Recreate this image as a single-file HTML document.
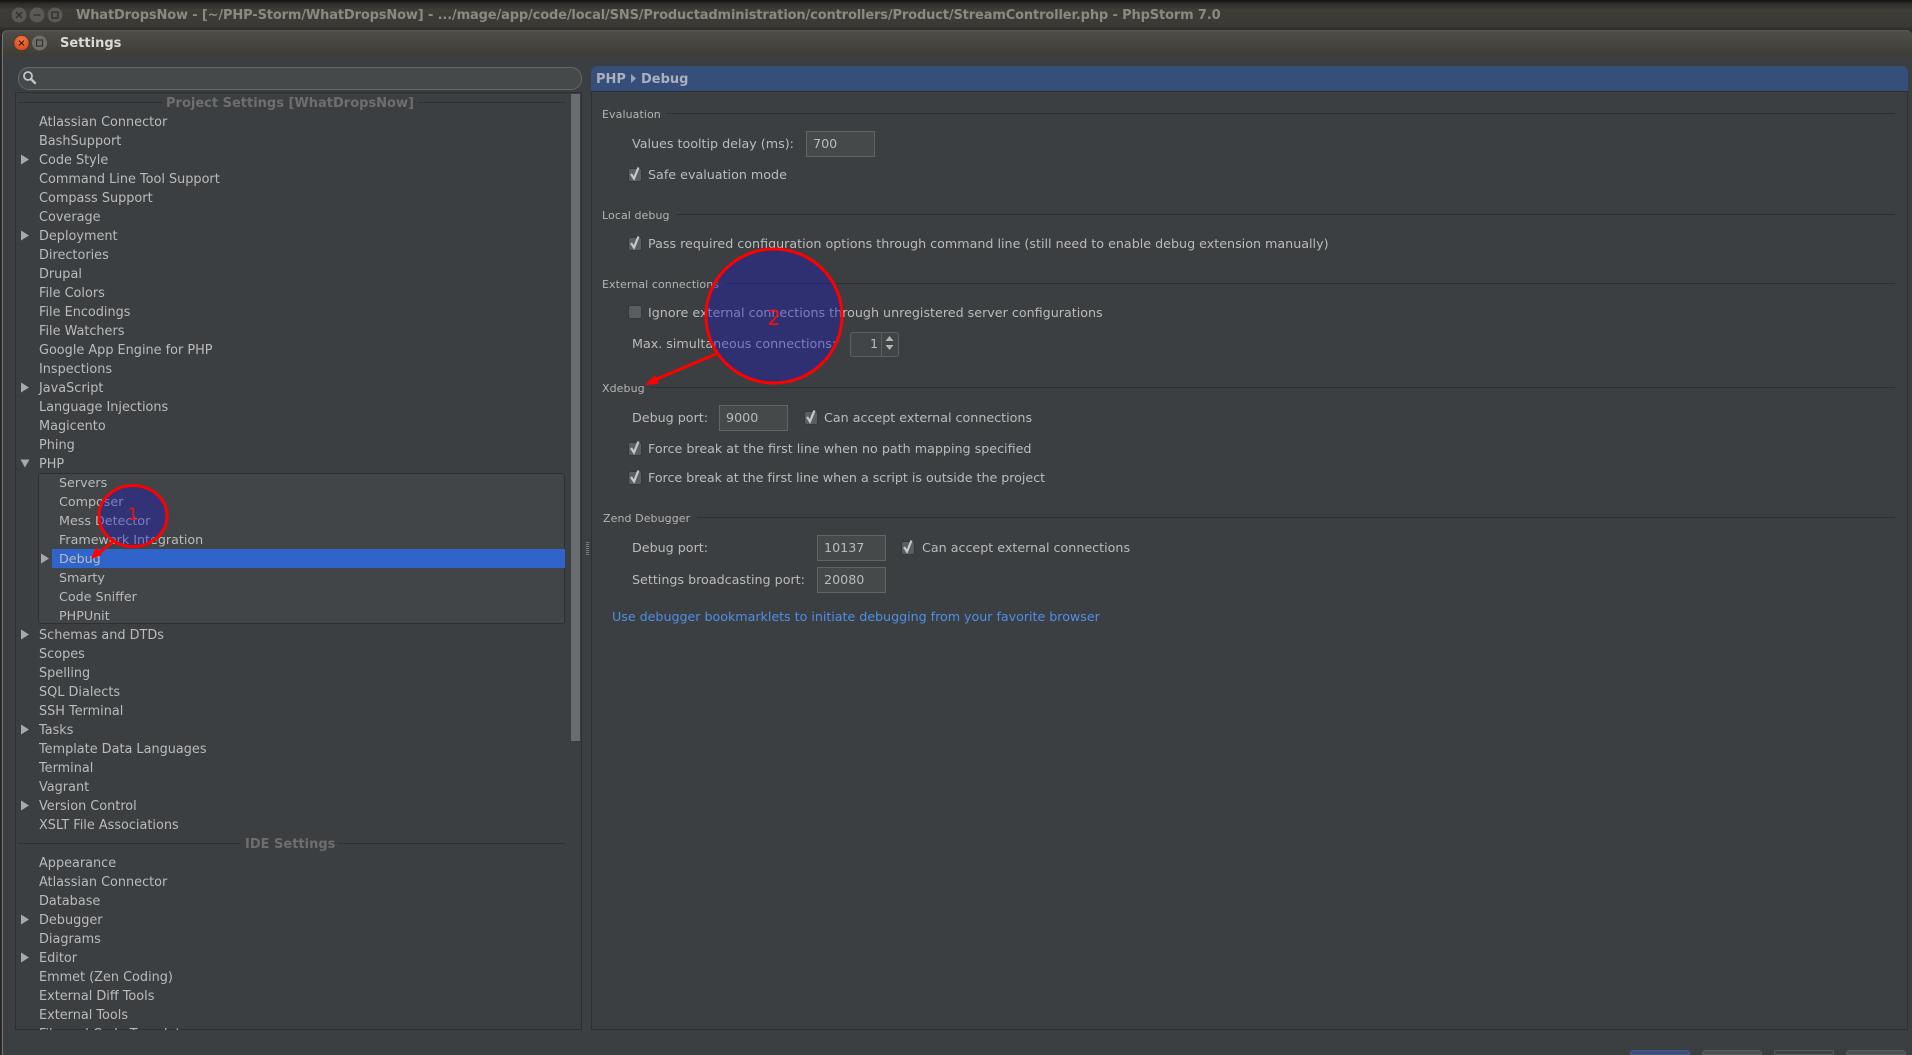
<!DOCTYPE html>
<html><head><meta charset="utf-8"><title>Settings</title>
<style>
html,body{margin:0;padding:0;background:#2b2a27}
body{width:1912px;height:1055px;overflow:hidden;position:relative;font:12.7px/19px "DejaVu Sans","Liberation Sans",sans-serif;color:#bbb}
div,a,span{position:absolute;white-space:nowrap}
#wt{left:0;top:0;width:1912px;height:30px;background:linear-gradient(#131210 0,#2e2d2a 4px,#3e3d38 10px,#3a3934 26px,#2c2b28 30px)}
#wtt{left:76px;top:5px;font-weight:bold;font-size:13px;line-height:21px;color:#8b8981;letter-spacing:-.143px}
#dlg{left:3px;top:30px;width:1909px;height:1025px;background:#3c3f41;border-radius:5px 5px 0 0;box-shadow:-1px 0 0 #77777a}
#dt{left:0;top:0;width:1909px;height:27px;border-radius:5px 5px 0 0;background:linear-gradient(#5a5953 0,#4d4c46 2px,#46453f 14px,#3d3c37 27px)}
#st{left:60px;top:34px;font-weight:bold;color:#dcdad5;font-size:13px}
#search{left:18px;top:67px;width:562px;height:21px;border:1px solid #65686a;border-radius:11px;background:#45494a}
#left{left:15px;top:92px;width:567px;height:938px;border:1px solid #2d2f30;box-sizing:border-box;overflow:hidden}
.r{left:39px;height:19px;line-height:21px;font-size:12.85px}
.c{left:59px;font-size:12.7px;line-height:19px}
.h{font-weight:bold;font-size:13px;line-height:21px;color:#6e6e6e}
.l{height:1px;background:#2d2f30}
#sub{left:38px;top:473px;width:527px;height:151px;background:#414547;border:1px solid #2d2f30;box-sizing:border-box;border-radius:3px}
#sel{left:52px;top:549px;width:513px;height:19px;background:#2f65ca}
#sb{left:571px;top:94px;width:9px;height:647px;background:#6a6d6f}
#rp{left:591px;top:66px;width:1317px;height:964px;border:1px solid #2d2f30;border-top:0;box-sizing:border-box;border-radius:6px 6px 0 0}
#rh{left:591px;top:66px;width:1317px;height:26px;background:#364e7a;border-radius:6px 6px 0 0;border-bottom:1px solid #2d3134;box-sizing:border-box;font-weight:bold;font-size:13px;color:#aab0bd;line-height:27px}
.g{font-size:11px;line-height:18px;height:16px;left:602px;color:#b4b4b4;letter-spacing:.08px}
.t{height:19px;line-height:19px}
.i{height:26px;width:69px;border:1px solid #646464;box-sizing:border-box;background:#45494a;line-height:24px;padding-left:6px;color:#bbb}
.ln{color:#4e8fe6;left:612px;top:607px;line-height:19px;text-decoration:none;letter-spacing:-.03px}
.btn{top:1050px;width:60px;height:5px;border-radius:3px 3px 0 0;box-sizing:border-box}
svg{position:absolute;overflow:visible}
</style></head><body>

<div id="wt"></div>
<div id="wtt">WhatDropsNow - [~/PHP-Storm/WhatDropsNow] - .../mage/app/code/local/SNS/Productadministration/controllers/Product/StreamController.php - PhpStorm 7.0</div>
<svg style="left:0;top:0" width="80" height="30">
<g fill="#5a5955"><circle cx="19" cy="15" r="7.5"/><circle cx="37" cy="15" r="7.5"/><circle cx="55" cy="15" r="7.5"/></g>
<g stroke="#2f2e2b" stroke-width="1.3" fill="none"><path d="M16 12l6 6M22 12l-6 6M33.5 15h7"/><rect x="52" y="12" width="6" height="6"/></g>
</svg>

<div id="dlg"><div id="dt"></div></div>
<svg style="left:0;top:30px" width="60" height="30">
<defs><radialGradient id="cl" cx=".5" cy=".35" r=".7"><stop offset="0" stop-color="#f57b4a"/><stop offset="1" stop-color="#cf4513"/></radialGradient></defs>
<circle cx="21.5" cy="13" r="7.7" fill="url(#cl)" stroke="#3a2a20" stroke-width=".6"/>
<path d="M19 10.500l5 5M24 10.500l-5 5" stroke="#3a1a0c" stroke-width="1.2"/>
<circle cx="39.500" cy="13" r="7.500" fill="#6f6e69"/>
<rect x="36.500" y="10" width="6" height="6" fill="none" stroke="#34332f" stroke-width="1.2"/>
</svg>
<div id="st">Settings</div>

<div id="search"></div>
<svg style="left:22px;top:70px" width="16" height="16"><circle cx="6" cy="6" r="4" fill="none" stroke="#c4c4c4" stroke-width="1.8"/><path d="M9 9l4 4" stroke="#c4c4c4" stroke-width="2.400" stroke-linecap="round"/></svg>

<div id="left"></div>
<div id="sb"></div>
<div class="l" style="left:18px;top:102px;width:145px"></div>
<div class="l" style="left:418px;top:102px;width:147px"></div>
<div class="h" style="left:166px;top:93px">Project Settings [WhatDropsNow]</div>
<div id="sub"></div>
<div id="sel"></div>
<div class="l" style="left:18px;top:843px;width:223px"></div>
<div class="l" style="left:338px;top:843px;width:227px"></div>
<div class="h" style="left:245px;top:834px">IDE Settings</div>

<div class="r" style="top:112px">Atlassian Connector</div>
<div class="r" style="top:131px">BashSupport</div>
<div class="r" style="top:150px">Code Style</div>
<div class="r" style="top:169px">Command Line Tool Support</div>
<div class="r" style="top:188px">Compass Support</div>
<div class="r" style="top:207px">Coverage</div>
<div class="r" style="top:226px">Deployment</div>
<div class="r" style="top:245px">Directories</div>
<div class="r" style="top:264px">Drupal</div>
<div class="r" style="top:283px">File Colors</div>
<div class="r" style="top:302px">File Encodings</div>
<div class="r" style="top:321px">File Watchers</div>
<div class="r" style="top:340px">Google App Engine for PHP</div>
<div class="r" style="top:359px">Inspections</div>
<div class="r" style="top:378px">JavaScript</div>
<div class="r" style="top:397px">Language Injections</div>
<div class="r" style="top:416px">Magicento</div>
<div class="r" style="top:435px">Phing</div>
<div class="r" style="top:454px">PHP</div>
<div class="r c" style="top:473px">Servers</div>
<div class="r c" style="top:492px">Composer</div>
<div class="r c" style="top:511px">Mess Detector</div>
<div class="r c" style="top:530px">Framework Integration</div>
<div class="r c" style="top:549px">Debug</div>
<div class="r c" style="top:568px">Smarty</div>
<div class="r c" style="top:587px">Code Sniffer</div>
<div class="r c" style="top:606px">PHPUnit</div>
<div class="r" style="top:625px">Schemas and DTDs</div>
<div class="r" style="top:644px">Scopes</div>
<div class="r" style="top:663px">Spelling</div>
<div class="r" style="top:682px">SQL Dialects</div>
<div class="r" style="top:701px">SSH Terminal</div>
<div class="r" style="top:720px">Tasks</div>
<div class="r" style="top:739px">Template Data Languages</div>
<div class="r" style="top:758px">Terminal</div>
<div class="r" style="top:777px">Vagrant</div>
<div class="r" style="top:796px">Version Control</div>
<div class="r" style="top:815px">XSLT File Associations</div>
<div class="r" style="top:853px">Appearance</div>
<div class="r" style="top:872px">Atlassian Connector</div>
<div class="r" style="top:891px">Database</div>
<div class="r" style="top:910px">Debugger</div>
<div class="r" style="top:929px">Diagrams</div>
<div class="r" style="top:948px">Editor</div>
<div class="r" style="top:967px">Emmet (Zen Coding)</div>
<div class="r" style="top:986px">External Diff Tools</div>
<div class="r" style="top:1005px">External Tools</div>
<div style="left:0;top:1020px;width:560px;height:10px;overflow:hidden"><div class="r" style="top:4px">File and Code Templates</div></div>

<svg style="left:0;top:0" width="60" height="1055">
<g fill="#a8a8a8">
<path d="M21 154.500l8 5-8 5zM21 230.500l8 5-8 5zM21 382.500l8 5-8 5zM21 629.500l8 5-8 5zM21 724.500l8 5-8 5zM21 800.500l8 5-8 5zM21 914.500l8 5-8 5zM21 952.500l8 5-8 5zM41 553.500l8 5-8 5z"/>
<path d="M20.500 459.500l9 0-4.500 8z"/>
</g></svg>

<div id="rp"></div>
<div id="rh"><span style="left:5px;top:0">PHP</span><span style="left:50px;top:0">Debug</span></div>
<svg style="left:631px;top:74px" width="6" height="10"><path d="M0 0l5 4.500-5 4.500z" fill="#9aa3b3"/></svg>

<div class="g" style="top:106px">Evaluation</div><div class="l" style="left:666px;top:113px;width:1229px"></div>
<div class="g" style="top:207px">Local debug</div><div class="l" style="left:676px;top:214px;width:1219px"></div>
<div class="g" style="top:276px">External connections</div><div class="l" style="left:726px;top:283px;width:1169px"></div>
<div class="g" style="top:380px">Xdebug</div><div class="l" style="left:650px;top:387px;width:1245px"></div>
<div class="g" style="top:510px;left:603px">Zend Debugger</div><div class="l" style="left:697px;top:517px;width:1198px"></div>

<div class="t" style="left:632px;top:134px">Values tooltip delay (ms):</div>
<div class="i" style="left:806px;top:131px">700</div>
<div class="t" style="left:648px;top:165px">Safe evaluation mode</div>
<div class="t" style="left:648px;top:234px">Pass required configuration options through command line (still need to enable debug extension manually)</div>
<div class="t" style="left:648px;top:303px">Ignore external connections through unregistered server configurations</div>
<div class="t" style="left:632px;top:334px">Max. simultaneous connections:</div>
<div style="left:850px;top:332px;width:49px;height:25px;border:1px solid #5c5f61;border-radius:3px;box-sizing:border-box;background:#414547"></div>
<div style="left:881px;top:333px;width:1px;height:23px;background:#5c5f61"></div>
<div class="t" style="left:870px;top:334px">1</div>
<svg style="left:884px;top:335px" width="12" height="20"><path d="M5.500 1l4 5h-8zM5.500 15l4-5h-8z" fill="#b4b4b4"/></svg>

<div class="t" style="left:632px;top:408px">Debug port:</div>
<div class="i" style="left:719px;top:405px">9000</div>
<div class="t" style="left:824px;top:408px">Can accept external connections</div>
<div class="t" style="left:648px;top:439px">Force break at the first line when no path mapping specified</div>
<div class="t" style="left:648px;top:468px;letter-spacing:-.03px">Force break at the first line when a script is outside the project</div>
<div class="t" style="left:632px;top:538px">Debug port:</div>
<div class="i" style="left:817px;top:535px">10137</div>
<div class="t" style="left:922px;top:538px">Can accept external connections</div>
<div class="t" style="left:632px;top:570px">Settings broadcasting port:</div>
<div class="i" style="left:817px;top:567px">20080</div>
<a class="ln" href="#">Use debugger bookmarklets to initiate debugging from your favorite browser</a>

<svg style="left:0;top:0" width="1000" height="520">
<defs><g id="cb"><rect x="0.500" y="1.500" width="13" height="13" rx="2" fill="#5b5e60" stroke="#35373a" stroke-width="1"/><path d="M3 7l3 4.500 4.500-11" fill="none" stroke="#c8c8c8" stroke-width="2.200"/></g></defs>
<use href="#cb" x="628" y="167"/>
<use href="#cb" x="628" y="236"/>
<rect x="628.500" y="305.500" width="13" height="13" rx="2" fill="#5b5e60" stroke="#35373a"/>
<use href="#cb" x="804" y="410"/>
<use href="#cb" x="628" y="441"/>
<use href="#cb" x="628" y="470"/>
<use href="#cb" x="901" y="540"/>
</svg>

<div style="left:586px;top:542px;width:3px;height:14px;background:repeating-linear-gradient(#7a7d7f 0 1px,transparent 1px 2px)"></div>

<div class="btn" style="left:1630px;background:#36517f;border:1px solid #4a5a78"></div>
<div class="btn" style="left:1702px;background:#4d5052;border:1px solid #5a5d5f"></div>
<div class="btn" style="left:1774px;background:#3f4042;border:1px solid #5a5d5f"></div>
<div class="btn" style="left:1846px;background:#4d5052;border:1px solid #5a5d5f"></div>

<svg style="left:0;top:0" width="1912" height="1055">
<ellipse cx="133" cy="516" rx="34" ry="30.500" fill="rgba(24,24,194,.38)" stroke="#f00" stroke-width="3"/>
<path d="M114 541L95 556" stroke="#f00" stroke-width="3" fill="none"/>
<path d="M91 559l5-12 6 8z" fill="#f00"/>
<text x="133" y="520" font-family="'DejaVu Sans',sans-serif" font-size="17" fill="#f01010" text-anchor="middle">1</text>
<ellipse cx="774" cy="316" rx="68" ry="67" fill="rgba(24,24,194,.38)" stroke="#f00" stroke-width="3"/>
<path d="M716 354L652 381" stroke="#f00" stroke-width="3" fill="none"/>
<path d="M645 385l10-10 4 9z" fill="#f00"/>
<text x="774" y="325" font-family="'DejaVu Sans',sans-serif" font-size="21" fill="#f01010" text-anchor="middle">2</text>
</svg>
</body></html>
